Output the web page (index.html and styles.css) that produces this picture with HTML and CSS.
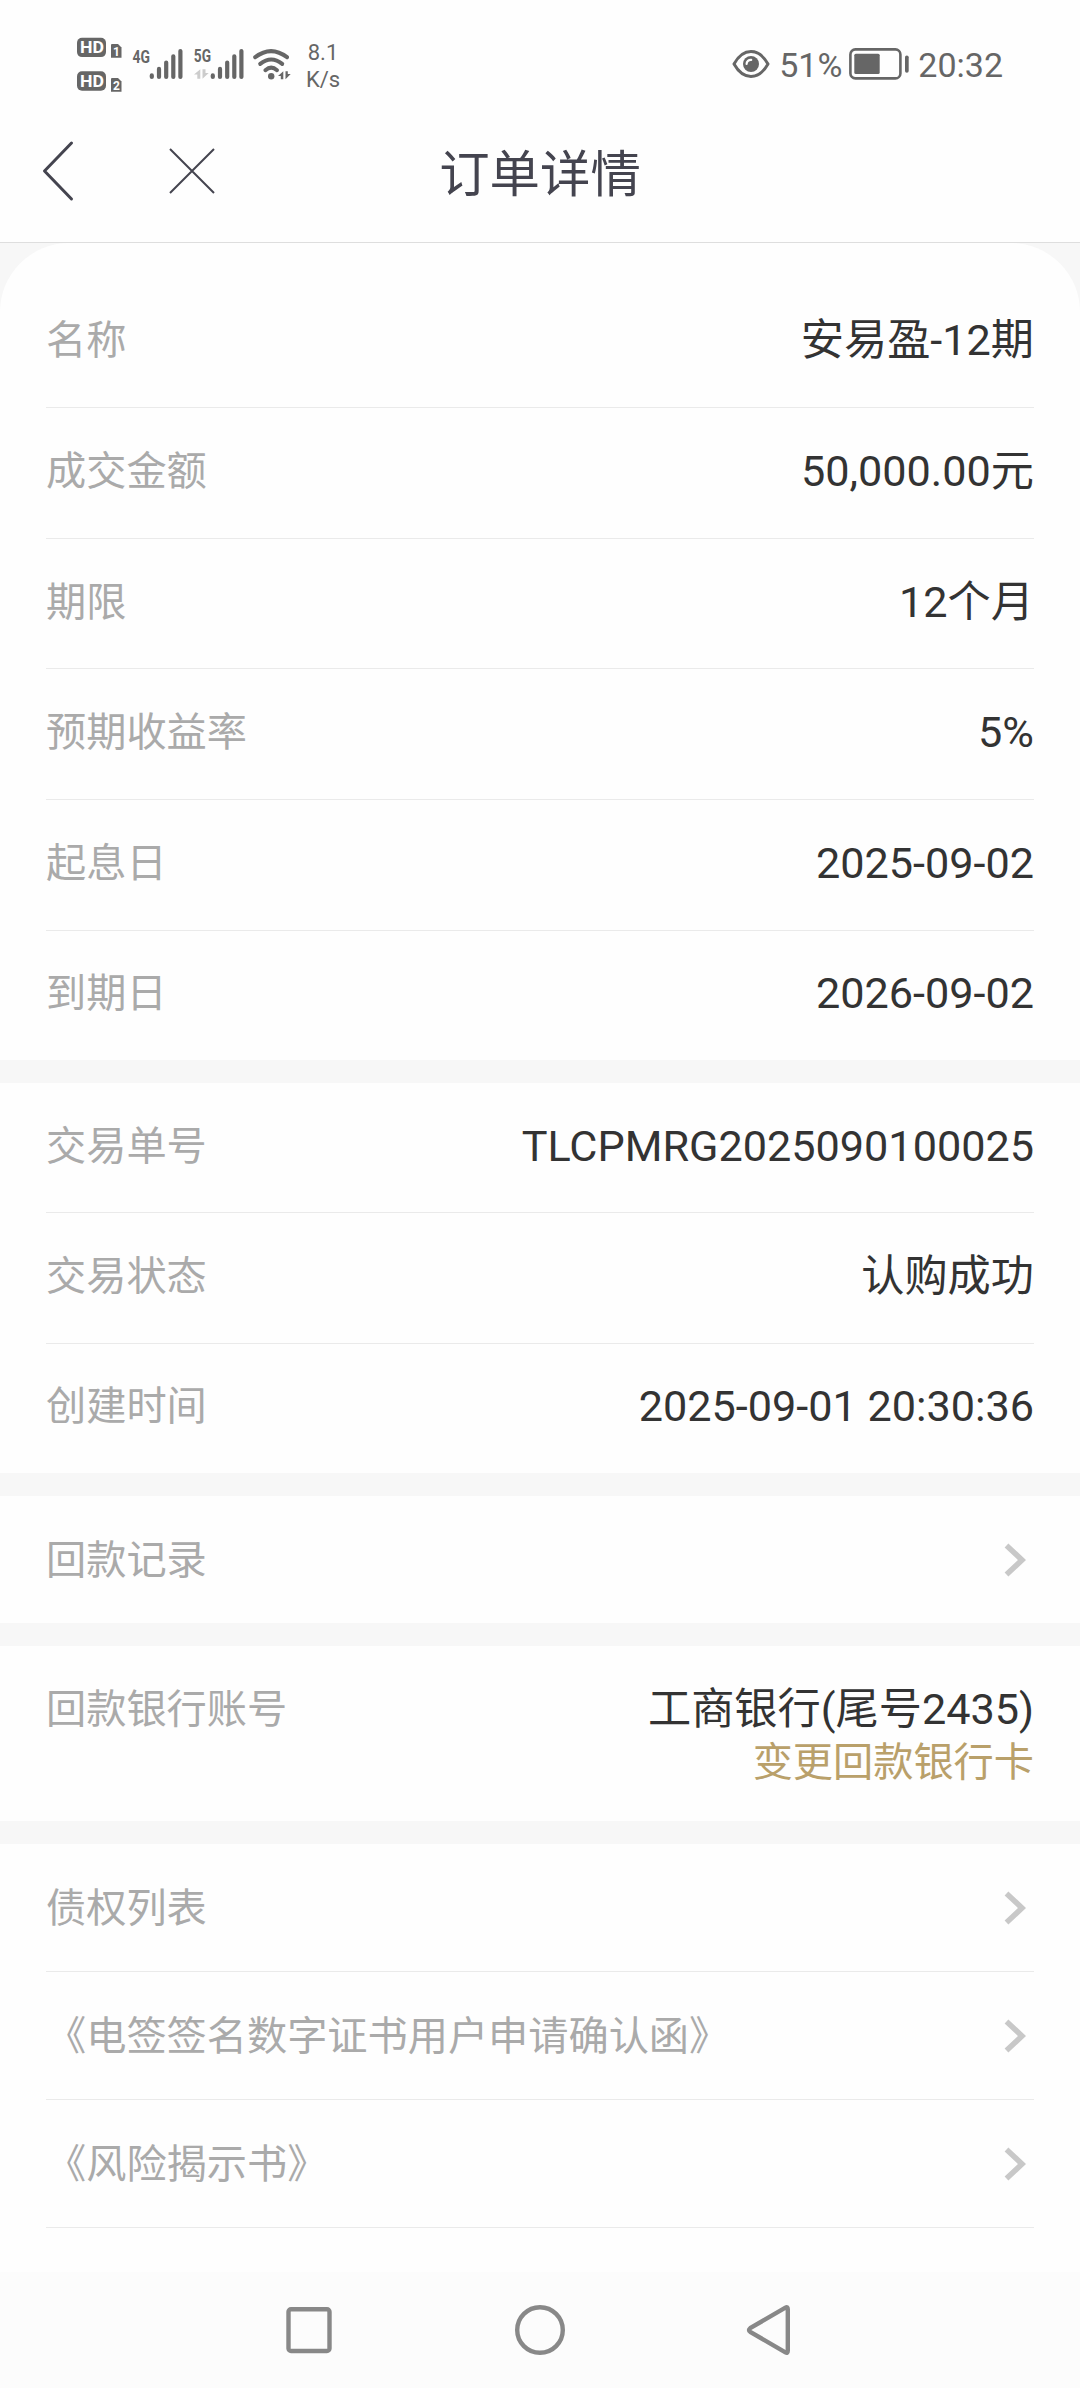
FILE: index.html
```html
<!DOCTYPE html>
<html lang="zh-CN">
<head>
<meta charset="utf-8">
<title>订单详情</title>
<link rel="stylesheet" href="styles.css">
</head>
<body>
<div class="statusbar">
  <svg class="status-icons" width="220" height="64" viewBox="74 33 220 64">
    <g fill="#666">
      <rect x="77" y="37.7" width="29" height="19.4" rx="5"/>
      <rect x="77" y="71.3" width="29" height="19.4" rx="5"/>
      <path d="M112 44h6l3.5 3.5v10.2H111V45a1 1 0 0 1 1-1z"/>
      <path d="M112 78h6l3.5 3.5v10.2H111V79a1 1 0 0 1 1-1z"/>
    </g>
    <g class="badge-text">
      <text x="80" y="53.4" font-size="16.5" textLength="24" lengthAdjust="spacingAndGlyphs">HD</text>
      <text x="80" y="87" font-size="16.5" textLength="24" lengthAdjust="spacingAndGlyphs">HD</text>
      <text x="113" y="55.8" font-size="12">1</text>
      <text x="113" y="89.8" font-size="12">2</text>
    </g>
    <g class="net-text">
      <text x="132.5" y="62.7" textLength="17.4" lengthAdjust="spacingAndGlyphs">4G</text>
      <text x="193.8" y="62.4" textLength="17.2" lengthAdjust="spacingAndGlyphs">5G</text>
    </g>
    <g stroke="#666" stroke-width="4.2" stroke-linecap="round" fill="none">
      <path d="M151.8 75.4V77M159 68.9V77M166.2 62.6V77M173.3 56.3V77M180.4 51V77"/>
      <path d="M212.8 75.4V77M220 68.9V77M227.2 62.6V77M234.3 56.3V77M241.4 51V77"/>
    </g>
    <path fill="#ccc" d="M200.3 69.3v9.4h-3v-4.2H194zM202.5 69.3h3v3.6h3.2l-6.2 5.8z"/>
    <g fill="none" stroke="#666" stroke-width="4" stroke-linecap="round">
      <path d="M255.2 57.2Q271 45 287 57.2"/>
      <path d="M260.2 63.9Q271.2 55 282.2 63.9"/>
      <path d="M265.4 70.2Q271.2 65.2 277 70.2"/>
    </g>
    <circle cx="271.2" cy="76.2" r="3.2" fill="#666"/>
    <path fill="#666" d="M283.3 71.3v8h-2.5v-3.4H278zM285.5 71.3h2.3v2.6h2.9l-5.2 5.4z"/>
  </svg>
  <div class="speed"><span>8.1</span><span>K/s</span></div>
  <div class="status-right">
    <svg width="38" height="30" viewBox="0 0 38 30">
      <path d="M2 15Q9 2.6 19 2.6T36 15Q29 27.4 19 27.4T2 15z" fill="none" stroke="#666" stroke-width="3" stroke-linejoin="round"/>
      <circle cx="19" cy="15" r="8" fill="#666"/>
      <path d="M14.6 15a4.2 4.2 0 0 1 4.6-4.2" fill="none" stroke="#fefefe" stroke-width="2.2" stroke-linecap="round"/>
    </svg>
    <span class="percent">51%</span>
    <svg class="battery" width="60" height="32" viewBox="0 0 60 32">
      <rect x="1.4" y="1.4" width="50" height="29" rx="5" fill="none" stroke="#666" stroke-width="2.6"/>
      <rect x="5.3" y="5.7" width="25.4" height="20.4" rx="1.5" fill="#666"/>
      <rect x="56" y="7.5" width="3.7" height="17.2" rx="1.8" fill="#666"/>
    </svg>
    <span class="clock">20:32</span>
  </div>
</div>

<header class="titlebar">
  <svg class="back" width="34" height="62" viewBox="0 0 34 62"><path d="M29.500 3 2.500 31l27 28" fill="none" stroke="#44444f" stroke-width="3" stroke-linecap="round" stroke-linejoin="round"/></svg>
  <svg class="close" width="46" height="46" viewBox="0 0 46 46"><path d="M1 1l44 44M45 1 1 45" fill="none" stroke="#44444f" stroke-width="2"/></svg>
  <h1 class="title">订单详情</h1>
</header>

<main class="content">
  <section class="card card-order">
    <div class="row"><span class="label">名称</span><span class="value">安易盈-12期</span></div>
    <div class="row"><span class="label">成交金额</span><span class="value">50,000.00元</span></div>
    <div class="row"><span class="label">期限</span><span class="value">12个月</span></div>
    <div class="row"><span class="label">预期收益率</span><span class="value">5%</span></div>
    <div class="row"><span class="label">起息日</span><span class="value">2025-09-02</span></div>
    <div class="row"><span class="label">到期日</span><span class="value">2026-09-02</span></div>
  </section>
  <section class="card card-trade">
    <div class="row"><span class="label">交易单号</span><span class="value">TLCPMRG2025090100025</span></div>
    <div class="row"><span class="label">交易状态</span><span class="value">认购成功</span></div>
    <div class="row"><span class="label">创建时间</span><span class="value">2025-09-01 20:30:36</span></div>
  </section>
  <section class="card card-records">
    <a class="row link"><span class="label">回款记录</span><svg class="chevron" viewBox="0 0 22 34"><path d="M2.5 2.5 18 17 2.5 31.5"/></svg></a>
  </section>
  <section class="card card-bank">
    <span class="label">回款银行账号</span>
    <div class="bank"><span class="value">工商银行(尾号2435)</span><a class="change">变更回款银行卡</a></div>
  </section>
  <section class="card card-docs">
    <a class="row link"><span class="label">债权列表</span><svg class="chevron" viewBox="0 0 22 34"><path d="M2.5 2.5 18 17 2.5 31.5"/></svg></a>
    <a class="row link"><span class="label">《电签签名数字证书用户申请确认函》</span><svg class="chevron" viewBox="0 0 22 34"><path d="M2.5 2.5 18 17 2.5 31.5"/></svg></a>
    <a class="row link"><span class="label">《风险揭示书》</span><svg class="chevron" viewBox="0 0 22 34"><path d="M2.5 2.5 18 17 2.5 31.5"/></svg></a>
  </section>
</main>

<nav class="navbar">
  <svg width="52" height="52" viewBox="0 0 52 52"><rect x="4.5" y="5.2" width="41" height="41.8" rx="2.5"/></svg>
  <svg width="52" height="52" viewBox="0 0 52 52"><circle cx="26" cy="26" r="22.8"/></svg>
  <svg width="52" height="52" viewBox="0 0 52 52"><path d="M41.4 3.600q2.400-1.200 2.400 1.600v41.600q0 2.800-2.400 1.600L6.200 27.800q-2.400-1.800 0-3.600z"/></svg>
</nav>
</body>
</html>
```
FILE: styles.css
```css
* { box-sizing: border-box; }

body {
  margin: 0;
  width: 1080px;
  height: 2388px;
  display: flex;
  flex-direction: column;
  overflow: hidden;
  background: #fefefe;
  color: #333;
  font-family: Roboto, "Noto Sans CJK SC", sans-serif;
}

svg { display: block; flex: none; }

/* Status bar */
.statusbar {
  height: 110px;
  flex: none;
  display: flex;
  align-items: flex-start;
  padding: 33px 77px 0 74px;
  color: #666;
}
.badge-text { fill: #fefefe; font-family: Roboto, sans-serif; font-weight: 700; }
.net-text { fill: #666; font-family: Roboto, sans-serif; font-weight: 700; font-size: 18.8px; }
.speed {
  width: 58px;
  margin-top: 6px;
  display: flex;
  flex-direction: column;
  align-items: center;
  font-size: 22px;
  line-height: 27px;
}
.status-right {
  height: 62px;
  margin-left: auto;
  display: flex;
  align-items: center;
  font-size: 34px;
  line-height: 40px;
}
.percent { margin-left: 9px; padding-top: 2px; }
.battery { margin-left: 6.5px; }
.clock { margin-left: 9.5px; padding-top: 2px; }

/* Title bar */
.titlebar {
  height: 133px;
  flex: none;
  display: grid;
  grid-template-columns: 127px 222px 298px;
  align-items: start;
  padding: 30px 0 0 42px;
  border-bottom: 1px solid #dedede;
}
.close { margin-top: 8px; }
.title {
  margin: 2px 0 0;
  text-align: center;
  color: #44444f;
  font-size: 50.4px;
  font-weight: 400;
  line-height: 66px;
}

/* Cards */
.content {
  flex: 1;
  display: flex;
  flex-direction: column;
  gap: 23px;
  background: #f7f7f7;
}
.card {
  flex: none;
  display: flex;
  flex-direction: column;
  padding: 0 46px;
  background: #fefefe;
}
.row {
  height: 130.6px;
  flex: none;
  display: flex;
  align-items: center;
  justify-content: space-between;
  padding-bottom: 2px;
  border-bottom: 1px solid #eaeaea;
}
.row:last-child { flex: 1; height: auto; border-bottom: 0; }
.link { padding-bottom: 0; }
.link .label { padding-top: 2px; }
.label { color: #aaa; font-size: 40.2px; line-height: 56px; }
.value { color: #333; font-size: 43.2px; line-height: 56px; }
.card-order { height: 817px; padding-top: 34.6px; border-radius: 69px 69px 0 0; }
.card-trade { height: 390px; }
.card-trade .row { height: 130.4px; }
.card-records { height: 127px; }
.card-bank { height: 175px; flex-direction: row; justify-content: space-between; padding-top: 36px; }
.bank { display: flex; flex-direction: column; align-items: flex-end; }
.change { color: #b9a06a; font-size: 40.2px; line-height: 49px; }
.card-docs { flex: 1; }
.card-docs .row, .card-docs .row:last-child { height: 128px; flex: none; border-bottom: 1px solid #eaeaea; }
.chevron { width: 22px; height: 34px; margin-right: 8px; }
.chevron path { fill: none; stroke: #c8c8c8; stroke-width: 5.5; }

/* System navigation */
.navbar {
  height: 116px;
  flex: none;
  display: flex;
  justify-content: center;
  align-items: center;
  gap: 178px;
  background: #fcfcfc;
}
.navbar path, .navbar rect, .navbar circle { fill: none; stroke: #888; stroke-width: 4.4; }
```
